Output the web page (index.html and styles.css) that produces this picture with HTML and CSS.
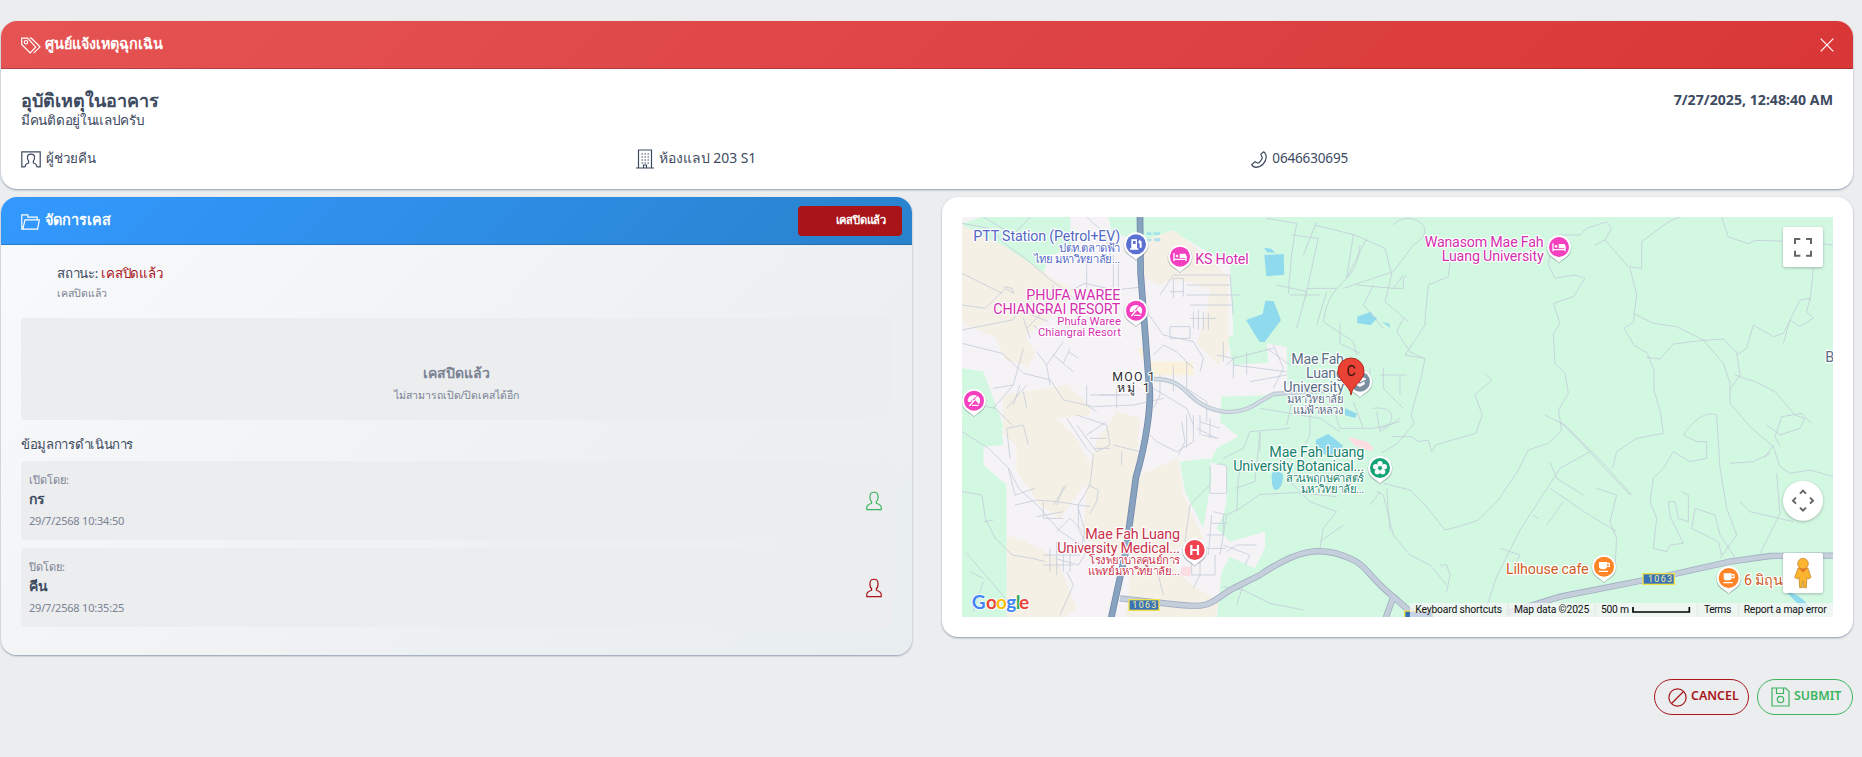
FILE: index.html
```html
<!DOCTYPE html>
<html lang="th">
<head>
<meta charset="utf-8">
<title>ศูนย์แจ้งเหตุฉุกเฉิน</title>
<link rel="stylesheet" href="styles.css">
</head>
<body>
<main class="page">
  <section class="card incident">
    <header class="card-head head-red">
      <svg class="icon tags" width="20" height="18" viewBox="0 0 20 18"><path d="M.7 1.2v6.2l8.4 8.4 5.6-5.6L6.6 1.2zM8.8 1.2h1.5l8.7 8.6-6.3 6.4M12.5 1.2"/><circle cx="5" cy="5.2" r="1.7"/></svg>
      <h1 class="head-title t-center">ศูนย์แจ้งเหตุฉุกเฉิน</h1>
      <svg class="icon close" width="14" height="14" viewBox="0 0 14 14"><path d="M.7.7l12.6 12.6M13.3.7L.7 13.3"/></svg>
    </header>
    <div class="incident-body">
      <div class="incident-top">
        <div>
          <h2 class="incident-title">อุบัติเหตุในอาคาร</h2>
          <p class="incident-desc">มีคนติดอยู่ในแลปครับ</p>
        </div>
        <time class="incident-time">7/27/2025, 12:48:40 AM</time>
      </div>
      <div class="facts">
        <div class="fact">
          <svg class="icon" width="20" height="17" viewBox="0 0 20 17"><path d="M3.6 15.8H.8V.8h18.4v15h-2.8M4 16.2c0-3 1.7-3.6 3.6-4.2V10C6.4 8.800 6.300 7 6.500 5.500c.3-3.200 6.700-3.200 7 0 .2 1.500.1 3.300-1.100 4.500v2c1.900.6 3.600 1.200 3.600 4.200"/></svg>
          <span class="fact-a">ผู้ช่วยคีน</span>
        </div>
        <div class="fact">
          <svg class="icon" width="18" height="20" viewBox="0 0 18 20"><path d="M2.500 18.500V1h13v17.500M0 19h18M7.500 18.500V16h3v2.500"/><path class="dots" d="M5.500 5h7.500M5.500 8h7.500M5.500 11h7.500M5.500 14h7.500"/></svg>
          <span class="fact-b">ห้องแลป 203 S1</span>
        </div>
        <div class="fact">
          <svg class="icon phone" width="16" height="17" viewBox="0 0 16 17"><path d="M9.800 3.400L12.500.8c1 .2 2.700 2.700 2.700 5.200 0 5-4.500 10.200-10.500 10.300C2.900 16 1 14.800.8 13.400l3.300-2.700 2.700 1.500c1.900-.8 4.300-3.800 4.500-5.700z"/></svg>
          <span class="fact-c">0646630695</span>
        </div>
      </div>
    </div>
  </section>

  <div class="columns">
    <section class="card manage">
      <header class="card-head head-blue">
        <svg class="icon folder" width="19" height="16" viewBox="0 0 19 16"><path d="M2.500 15.200H.8V.8h6v2.400h9.400v2.500M1.800 15.200L4 5.800h14.300l-1.700 9.400z"/></svg>
        <h2 class="head-title t-manage">จัดการเคส</h2>
        <span class="badge">เคสปิดแล้ว</span>
      </header>
      <div class="manage-body">
        <div class="status">
          <p class="status-line">สถานะ: <b>เคสปิดแล้ว</b></p>
          <p class="status-sub">เคสปิดแล้ว</p>
        </div>
        <div class="closed">
          <p class="closed-title">เคสปิดแล้ว</p>
          <p class="closed-sub">ไม่สามารถเปิด/ปิดเคสได้อีก</p>
        </div>
        <h3 class="log-title">ข้อมูลการดำเนินการ</h3>
        <div class="log">
          <div>
            <p class="log-label">เปิดโดย:</p>
            <p class="log-name">กร</p>
            <p class="log-date">29/7/2568 10:34:50</p>
          </div>
          <svg class="icon green" width="16" height="20" viewBox="0 0 16 20"><path d="M.8 18.600v-2.400c0-2 1.500-2.800 4.800-4v-1.400C4 9.500 3.800 7 4 5c.3-5 7.700-5 8 0 .2 2 0 4.500-1.600 5.800v1.400c3.300 1.200 4.800 2 4.800 4v2.400z"/></svg>
        </div>
        <div class="log">
          <div>
            <p class="log-label">ปิดโดย:</p>
            <p class="log-name">คีน</p>
            <p class="log-date">29/7/2568 10:35:25</p>
          </div>
          <svg class="icon red" width="16" height="20" viewBox="0 0 16 20"><path d="M.8 18.600v-2.400c0-2 1.500-2.800 4.800-4v-1.400C4 9.500 3.800 7 4 5c.3-5 7.700-5 8 0 .2 2 0 4.500-1.600 5.800v1.400c3.300 1.200 4.800 2 4.800 4v2.400z"/></svg>
        </div>
      </div>
    </section>

    <section class="card map-card">
      <svg class="map" width="871" height="400" viewBox="66 66 2613 1200">
        <defs>
          <g id="pin"><path class="pin-shadow" d="M0 50C-7 38-37 34-37 2a37 37 0 0 1 74 0C37 34 7 38 0 50z"/><path fill="#fff" d="M0 47C-7 35-36 30-36 0a36 36 0 0 1 72 0C36 30 7 35 0 47z"/><circle r="30"/></g>
          <g id="bed"><path d="M-18-11v24M-18 8h36M18-2v15" fill="none" stroke="#fff" stroke-width="4"/><circle cx="-9" cy="-2" r="4" fill="#fff"/><path fill="#fff" d="M-1-9h16q4 0 4 6v7H-1z"/></g>
          <g id="cup"><path fill="#fff" d="M-15-14h24v15c0 9-24 9-24 0zM-16 12h28v4h-28z"/><path d="M9-10h7v9h-8" fill="none" stroke="#fff" stroke-width="3.500"/></g>
          <g id="parasol"><path d="M-18 4c-4-14 12-26 27-19C-1-9-8-2-10 4zM2-3c3-5 5-8 10-10 8 6 8 17 3 24z" fill="#fff"/><path d="M-6 2c2-7 7-12 13-15" stroke="#fff" stroke-width="3" fill="none"/><path d="M2-2l-16 18M-6 14h20" stroke="#fff" stroke-width="4"/></g>
        </defs>
        <rect class="m-green" x="66" y="66" width="2613" height="1200"/>

        <path class="m-urban" d="M66 66H505L515 110 600 140 640 190 700 110 870 210 880 420 862 430 880 510 950 505 985 505 980 445 1040 455 1042 570 1110 598 1000 600 845 605 840 680 895 725 830 760 810 800 860 815 860 920 850 960 830 1000 870 1040 975 1010 975 1060 945 1120 870 1085 845 1130 830 1266H370L200 1266 200 870 130 810 130 750 180 740 190 690 130 530 66 520z"/>
        <g class="m-green">
          <path d="M125 66h265l5 100-70 15-15 60-100-50-90-50-50-30V85z"/>
          <path d="M66 520l64 10 20 80 35 90 5 50-60 5v65l65 50 5 396H66z"/>
          <path d="M720 800l90-10 5 60-15 90-10 60-55-110z"/>
          <path d="M595 940l70 15 10 25-10 8-75-22z" fill="#b5eccb"/>
        </g>
        <g class="m-beige">
          <path d="M66 90l130 65 150 100 60 30-40 50-110 90 30 50-20 40-70-20-30-70-100-40z"/>
          <path d="M600 150l30-20 70-25 65 50 100 90v220l-30 45-65-65 30-90 10-70-60-25-60-5-30 15-50-20z"/>
          <path d="M190 600l190-30 70 60 0 30-100 10 60 60 30 60 25 40-45 60-60 80-60-40-70-100 0-80-40-30z"/>
          <path d="M470 740l60-90 70 20-10 130-30 180-20 110-110-60 10-190z"/>
          <path d="M600 840l115-50 15 110 60 130-80 30-5 60 40 40 90 60-10 46H555l20-150-10-130z"/>
          <path d="M200 1020l60 20 90 50 60 150-50 40H200z"/>
          <path d="M590 460h30l10 40 130 0v40H640z" fill="#f9f1dc"/>
        </g>
        <g class="m-water">
          <path d="M973 180l58-3 2 62-54 5zM918 375l50-18 8-40 25 1 22 58-50 66-15-2zM972 158l22 3 12 12-25-1zM1252 365l40-15 8 12 12 8-20 20-40-5zM1326 381l22 5 2 12zM1215 640l36 16-6 13-30-8zM1127 735l38-18 45 35-20 20-20 10-42-10zM995 840c0-16 34-16 34 5 0 26-13 40-22 40s-12-20-12-45zM2538 1190c25 0 70 30 78 62l-8 10z"/>
          <path d="M620 112h14v8h-14zM640 112h20v8h-20zM622 132h12v7h-12zM642 130h19v9h-19z" opacity=".7"/>
        </g>
        <path d="M1222 725l60 15 20 20-10 8-48-15zM725 1115h30l-5 30-30-5z" fill="#fcdde2"/>

        <g class="roads">
          <path d="M66 85l80 15 60 55 50 35 70 60 60 45 50 50M270 66l-70 75M130 66l120 70M440 66l55 50 20 80M66 330l70 10 60-60 25 15-5-15-25-5M66 235l120 60M66 405l150-30 45-50 30-40M66 445l120 30 65 60 80 20 40 60 90 20 120-5 90-20M290 470l30 40 10 60M320 510l50-70M340 480l60 50M385 470l30 20M390 460l-20 45M260 400l60-60 20-70M280 390l35 30M275 360l50 20M250 370l20 60M395 285l40-20 90 20 90-10M440 180v110M520 180v115M535 290v-90M660 300l40-60h170l10 120M700 310v-60h30v55M690 290h40M740 270l130 0M740 300h160M750 330h130M760 350v50M775 345v60M790 350v55M805 355v50M750 370h80M690 395h60v35h-60zM620 350l50 70 90 20 30 50-10 40M640 480l30-30 40 20 50 50M660 540v60l-20 40M700 510v80M640 580l100 60 20 50M740 500v80l60 40v60M830 480l50 10 120-30M880 490v60M920 470v70M880 510l160 20M930 560l110-20M890 480l-30 30M850 440v60"/>
          <path d="M66 620l100 20 50 50M160 640l60-70M200 640l60-70M240 570l-20 60M260 640l-10-50M440 570v60l30 20M530 580l0 60M480 600h90M450 600h90M250 460l-30 110-60 10"/>
          <path d="M66 710l80 50 60 60 30 60 60 55 60 70 60 40 30 30M210 790l-10-90 50-10 15 60M205 820l20 80 60-20M225 930l65-15 60 5 100 15M310 920v50h60M340 930l40-60M350 930l20-55M290 965l80-15M350 1010l40-40 60 60M410 690l60 80 40-20-10-60-90-30M380 670l60 90 20 20-10 90-35 60 0 70 20 40M450 730h50M460 760h50M440 720l60-40M520 750l80 20M545 770l0 40M445 870l30 15-5 35M415 940l20 70-10 40M470 920l-20 35M330 1060v70M350 1040v100M370 1060v70M390 1050v80M310 1080h110M310 1110h90M345 1090l70 20 25-40M380 1130l20 40-40 90M240 1245l-40-30-60-70-60-70M66 890l60 10 10 70 30 60 50 50 60 10 40 10M130 980l30-5M130 1160l-30 90M90 1130l40 20"/>
          <path d="M725 680l10 60-20 40M740 660v100M760 660v80l-50 30-60-30-20-20M770 700l60 30M780 680l60 20M785 720l50 10M780 660v60M810 670v60M830 810c0-5 25-5 30 5v80h-50v-80M810 870l-60 60-15 110M820 950l40 10-20 120M815 960l-10 120M815 985h45M800 1020h50v-60M740 1060h120M850 1050l80 30-15 30M860 1070l30-20h60M755 1080v60h70v-60M780 1080v60l-20 40M650 1120l20 80M860 960l40-20 60-42 110-5 120 12M890 950l5-100 10-50M885 880l60-20 15-150M960 710v60M850 790l60-30 20-50 120-10M910 1170l-20 60M850 1175l60 10 80 40 100 20"/>
          <path d="M980 70l90 15-15 90-10 120M1055 120l80 10-40 180M1130 80l-40 100M1125 90l120 30 90 40 20 80-20 80 70 60M1240 120l-20 130M1280 130l-60 120M1360 90c40-50 150 5 60 60l-60 80-60 20-90 30M1010 270l90 20-30 110M1050 300h90M1100 280h90M1160 290l-30 100M1250 270l110 10 30-40M1300 270l-30 60 60 70M1360 280l30 0 0-30 10-10M1150 380l90 60 10 40M1200 385v60l60 30M1150 380c20-140 100-100 110-230M1230 540l60 10M1290 520v60M1330 520v60l60 60M1320 540h80M1380 540v60M980 460l70 50M1000 450l30 70-30 60M1050 480l60 40M960 640l180 30 60 40M1060 600l-20 90M1110 600v120l-20 40M1180 640l20 60 100 0 80-20M1240 620l30 80M1310 650l10 60 60-40M1300 640c70-10 70 50 20 60"/>
          <path d="M1530 200l-5 45-60 25-8 80-2 40-60 90 60 10-12 60-30 110 10 25-50 60-50 30M1355 725l60 0 20 15 30-5 10 35 12-20 50-15 70-20 20-55-22-60 50-45-20-20M1390 370l-20 40 40 60 40 20M1330 865l80 20 50 50 55 70 40-10 60-20 60-60 60-90 30-60 60-20 40-40-10-60 30-50-10-60-30-30-5-90 20-30-20-60 60-20 35-55-30-10-60 10-20-40 10-60M1815 660l60 30 120 120 80 90M1930 900l-80-50-20-50M1950 770l-90 50-120 185-70 140-40 120M1780 960l15 12M1820 990l50-70M1680 1060l60 20-10 20M1830 880l110 75 90 55M1310 890l20 10 30 120 50 60 60 30 50 60M1320 890l-30 40M1340 880l10 130M1140 1060l10-60 40-50-80-30-60-60M1500 1110l20 0 10 30-10 50M1210 990l-70 50"/>
          <path d="M1860 120l60 0 20-20 60-20 15 20-20 35-30 15M1995 135l70 80 40 5 0-80 80-60 50-20M2070 220l20 80-8 60 0 20-30 20 30 50 40 25 20 50 0 60 20 70 8 60-80 15-60 40-12 50M2080 355l60 30 70 10 80 40 60 70 20 60 0 60 60 70 70 60 20 60 30 20 60-10 70 20M2120 487l40 5 40-45 80-10 70-5 40 40 10 70-30 40M2385 540l60 20 60 30 60 70 30 10-15 30-60 20-40-30M2500 750l-20 30-5 10M2520 755l-15-30 20-60 60-10 30 30M2390 480l30-20 20-70 60 35 30-10 50-100 30-5-10 40 20 20-40 25-30-20-20 70M2345 66l20 60 60 20 20-10 160 5 80 10M2620 220l-10 100M2330 660c-20-10-60 0-100 60l40 20 30 0v50l-50 10-50-30-30 50-30 30-10 70 20 50-10 90 40 10 10-20 40-5-40-80-5-45 20 0 10 50 30 10v-80l-20-10M2265 940l60 20 15 60 40 60 10 20M2330 660l10 160 20 120 30 80-50 70M2265 940l-10 60 40 20 40 20 10 40M2510 835l10 120-60 120M2400 920l30 30 130 30M2370 805l70-5 50-25M1860 680l60 60 150 160M1970 880l60 20-20 80 20 50-5 90"/>
        </g>
        <g class="roads wide"><path d="M640 552c80 0 90 35 130 65s110 50 170 15l60-35 160-10"/></g>
        <g class="roads wide inner"><path d="M640 552c80 0 90 35 130 65s110 50 170 15l60-35 160-10"/></g>
        <g fill="none">
          <path class="r-edge" d="M540 1210l180 20c100 10 90-10 160-50l80-40c110-75 180-90 270-50 50 20 60 60 130 115l90 80M1360 1205l-25 70M1700 1255l160-50 330-65 180-40 120-17 189-1"/>
          <path class="r-grey" d="M540 1210l180 20c100 10 90-10 160-50l80-40c110-75 180-90 270-50 50 20 60 60 130 115l90 80M1360 1205l-25 70M1700 1255l160-50 330-65 180-40 120-17 189-1"/>
          <path class="r-main-edge" d="M600 66l2 170 24 320c12 60-8 190-38 290l-30 220-46 210"/>
          <path class="r-main" d="M600 66l2 170 24 320c12 60-8 190-38 290l-30 220-46 210"/>
        </g>

        <g class="shield"><rect x="567" y="1214" width="90" height="32"/><text x="613" y="1240" textLength="72">1063</text><rect x="2109" y="1136" width="94" height="32"/><text x="2160" y="1162" textLength="72">1063</text><rect x="1394" y="1248" width="86" height="32"/></g>

        <g class="lbl blue end"><text x="541" y="138" textLength="441">PTT Station (Petrol+EV)</text><g class="th"><text x="541" y="170" textLength="184">ปตท.ตลาดฟ้า</text><text x="541" y="203" textLength="260">ไทย มหาวิทยาลัย...</text></g></g>
        <g class="lbl pink end"><text x="541" y="315" textLength="282">PHUFA WAREE</text><text x="541" y="357" textLength="381">CHIANGRAI RESORT</text><g class="th"><text x="543" y="391" textLength="191">Phufa Waree</text><text x="543" y="424" textLength="249">Chiangrai Resort</text></g><text x="1811" y="156" textLength="357">Wanasom Mae Fah</text><text x="1811" y="199" textLength="306">Luang University</text></g>
        <g class="lbl pink"><text x="766" y="207" textLength="160">KS Hotel</text></g>
        <g class="lbl dark"><text x="517" y="557" textLength="128">MOO 1</text><text x="531" y="592" textLength="98">หมู่ 1</text></g>
        <g class="lbl slate end"><text x="1212" y="507" textLength="158">Mae Fah</text><text x="1212" y="549" textLength="114">Luang</text><text x="1212" y="591" textLength="182">University</text><g class="th"><text x="1212" y="625" textLength="170">มหาวิทยาลัย</text><text x="1212" y="658" textLength="152">แม่ฟ้าหลวง</text></g></g>
        <g class="lbl teal end"><text x="1273" y="786" textLength="285">Mae Fah Luang</text><text x="1273" y="828" textLength="393">University Botanical...</text><g class="th"><text x="1273" y="860" textLength="235">สวนพฤกษศาสตร์</text><text x="1273" y="893" textLength="190">มหาวิทยาลัย...</text></g></g>
        <g class="lbl crimson end"><text x="720" y="1033" textLength="284">Mae Fah Luang</text><text x="720" y="1075" textLength="368">University Medical...</text><g class="th"><text x="720" y="1107" textLength="272">โรงพยาบาลศูนย์การ</text><text x="720" y="1140" textLength="275">แพทย์มหาวิทยาลัย...</text></g></g>
        <g class="lbl orange"><text x="1698" y="1137" textLength="248">Lilhouse cafe</text><text x="2412" y="1169" textLength="118">6 มิถุน</text></g>
        <g class="lbl slate"><text x="2656" y="500">B</text></g>

        <use href="#pin" x="588" y="148" fill="#5b70d2"/><path transform="translate(588 148)" d="M-14-15h17v30h-17zM-18 12h25v4h-25zM6-6l5 4v12h6V-8l-6-6" fill="#fff"/><path d="M579 138h8v9h-8z" fill="#5b70d2"/>
        <g fill="#f43fbe"><use href="#pin" x="720" y="185"/><use href="#pin" x="588" y="347"/><use href="#pin" x="102" y="617"/><use href="#pin" x="1857" y="156"/></g>
        <use href="#bed" x="720" y="185"/><use href="#bed" x="1857" y="156"/><use href="#parasol" x="588" y="347"/><use href="#parasol" x="102" y="617"/>
        <g fill="#ff8427"><use href="#pin" x="1992" y="1115"/><use href="#pin" x="2366" y="1149"/></g><use href="#cup" x="1992" y="1115"/><use href="#cup" x="2366" y="1149"/>
        <use href="#pin" x="764" y="1065" fill="#f04352"/><path d="M754 1050v30M774 1050v30M754 1065h20" stroke="#fff" stroke-width="6.500"/>
        <use href="#pin" x="1320" y="819" fill="#15a374"/><g fill="#fff"><circle cx="1320" cy="806" r="8"/><circle cx="1333" cy="815" r="8"/><circle cx="1328" cy="830" r="8"/><circle cx="1312" cy="830" r="8"/><circle cx="1307" cy="815" r="8"/></g><circle cx="1320" cy="819" r="4" fill="#15a374"/>
        <use href="#pin" x="1260" y="560" fill="#7b8fa0"/><path d="M1240 552l20-10 20 10-20 10zM1248 560l12 6 14-7v9l-14 8-12-7z" fill="#fff"/>
        <path class="marker" d="M1233 600C1231 572 1194 560 1194 528a39 39 0 0 1 78 0C1272 560 1235 572 1233 600z"/><text class="marker-c" x="1233" y="542">C</text>

        <g class="google" transform="translate(0 1243)"><text x="95" fill="#4285f4">G</text><text x="138" fill="#ea4335">o</text><text x="168" fill="#fbbc05">o</text><text x="199" fill="#4285f4">g</text><text x="227" fill="#34a853">l</text><text x="237" fill="#ea4335">e</text></g>

        <g class="control"><rect x="2529" y="96" width="120" height="120" rx="6"/><circle cx="2589" cy="917" r="60"/><rect x="2529" y="1074" width="120" height="120" rx="6"/></g>
        <path class="glyph" d="M2565 147v-15h16M2598 132h15v15M2613 167v15h-15M2581 182h-16v-15"/>
        <path class="glyph" d="M2580 896l9-9 9 9M2580 938l9 9 9-9M2568 908l-9 9 9 9M2610 908l9 9-9 9"/>
        <g><path d="M2574 1120q15-8 30 0l9 27-8 5-4-5-2 31h-8v-18h-4v18h-8l-2-31-4 5-9-5z" fill="#fbb52f" stroke="#b9791c" stroke-width="2"/><path d="M2576 1119h26l-13 14z" fill="#e8762c"/><circle cx="2589" cy="1106" r="16" fill="#fbb52f" stroke="#b9791c" stroke-width="2"/></g>

        <path d="M1410 1224h1269v42H1410z" fill="#f5f5f5" opacity=".75"/><path d="M1705 1224v42M1966 1224v42M2272 1224v42M2396 1224v42" stroke="#e4e8e6" stroke-width="3"/>
        <g class="foot"><text x="1426" y="1254" textLength="260">Keyboard shortcuts</text><text x="1722" y="1254" textLength="226">Map data ©2025</text><text x="1983" y="1254" textLength="84">500 m</text><text x="2292" y="1254" textLength="82">Terms</text><text x="2411" y="1254" textLength="249">Report a map error</text></g>
        <path d="M2079 1236v15h169v-15" fill="none" stroke="#000" stroke-width="5"/>
      </svg>
    </section>
  </div>

  <footer class="actions">
    <button class="btn cancel red"><svg class="icon" width="19" height="19" viewBox="0 0 19 19"><circle cx="9.500" cy="9.500" r="8.600"/><path d="M3.500 15.500l12-12"/></svg><span class="btn-text">CANCEL</span></button>
    <button class="btn green"><svg class="icon" width="19" height="20" viewBox="0 0 19 20"><path d="M1 1h13.500L18 4.500V19H1zM5.500 1v5.500h7V1"/><circle cx="9.500" cy="12.500" r="3.200"/></svg><span class="btn-text">SUBMIT</span></button>
  </footer>
</main>
</body>
</html>
```
FILE: styles.css
```css
* { box-sizing: border-box; }
body { margin: 0; background: #ebedee; color: #3d4a5f; font-family: "Noto Sans", "Open Sans", sans-serif; font-size: 14px; overflow: hidden; }
h1, h2, h3, p { margin: 0; white-space: nowrap; }
.page { width: 1854px; height: 757px; padding: 21px 1px 0; }
.card { border-radius: 16px; overflow: hidden; box-shadow: 0 1px 2px rgba(70, 90, 125, .55); background: #fff; }
.icon { fill: none; stroke: currentColor; stroke-width: 1.2; flex: none; }
.dots { stroke-dasharray: 1.5 1.5; }
.green { color: #3db560; }
.red { color: #a91419; }

.card-head { display: flex; align-items: center; height: 48px; padding: 0 10px 0 20px; color: #fff; }
.head-red { background: linear-gradient(135deg, #e55353, #d93737); border-bottom: 1px solid rgba(100, 30, 40, .35); padding-right: 19px; }
.head-blue { background: linear-gradient(135deg, #3399ff, #2982cc); border-bottom: 1px solid rgba(30, 60, 100, .35); }
.head-title { font-size: 14.400px; font-weight: 700; line-height: 20px; margin-left: 4px; padding-bottom: 2px; }
.t-manage { margin-left: 5px; }
.close { margin-left: auto; }
.tags, .folder { margin-top: 3px; }

.incident { height: 168px; }
.incident-body { padding: 19px 20px; }
.incident-top { display: flex; justify-content: space-between; height: 60px; }
.incident-title { font-size: 18px; font-weight: 600; line-height: 24px; }
.incident-desc { font-size: 13.500px; letter-spacing: -.3px; line-height: 17px; }
.incident-time { font-size: 14.150px; font-weight: 700; line-height: 24px; }
.facts { display: grid; grid-template-columns: repeat(3, 1fr); gap: 32px; }
.fact { display: flex; align-items: center; gap: 5px; height: 20px; white-space: nowrap; }
.fact .icon { margin-top: 2px; }
.fact-a { font-size: 13.300px; }
.fact-b { font-size: 13.900px; }
.fact-c { font-size: 13.500px; letter-spacing: -.15px; }
.phone { margin-left: 1px; }

.columns { display: grid; grid-template-columns: 1fr 1fr; gap: 30px; margin-top: 8px; align-items: start; }
.manage { height: 458px; background: linear-gradient(135deg, #f9fafb, #f0f2f4 50%, #e8edf0); }
.badge { margin-left: auto; width: 104px; height: 30px; border-radius: 4px; background: #a91419; font-size: 11.200px; letter-spacing: -.2px; font-weight: 600; line-height: 28px; text-align: right; padding-right: 16px; white-space: nowrap; }
.manage-body { padding: 17px 20px; }
.status { padding-left: 36px; height: 56px; }
.status-line { font-size: 13.300px; letter-spacing: -.25px; line-height: 22px; }
.status-line b { color: #a91419; font-weight: 500; }
.status-sub { font-size: 10.600px; line-height: 18px; color: #7a8294; }
.closed { height: 102px; background: #ebedee; border-radius: 4px; text-align: center; padding-top: 44px; color: #7a8294; }
.closed-title { font-size: 14px; font-weight: 600; line-height: 22px; }
.closed-sub { font-size: 10.500px; line-height: 23px; }
.log-title { font-size: 13.200px; letter-spacing: -.35px; font-weight: 500; line-height: 22px; margin: 13px 0 6px; }
.log { display: flex; justify-content: space-between; align-items: center; height: 79px; padding: 1px 10px 0 8px; margin-bottom: 8px; background: #ebedee; border-radius: 4px; }
.log-label, .log-date { font-size: 11px; line-height: 20px; color: #7a8294; }
.log-label { line-height: 19px; }
.log-date { letter-spacing: -.2px; line-height: 23px; }
.log-name { font-weight: 700; line-height: 20px; }

.map-card { height: 440px; padding: 20px; }
.map { display: block; font-family: Roboto, sans-serif; }
.m-green { fill: #d3f8e2; }
.m-urban { fill: #f5f3f6; }
.m-beige { fill: #f5f0e5; }
.m-water { fill: #90daee; }
.roads { fill: none; stroke: #bfc9d8; stroke-width: 2.600; stroke-linejoin: round; opacity: .85; }
.roads.wide { stroke: #b5c3d0; stroke-width: 13; opacity: 1; }
.roads.inner { stroke: #d3dbe4; stroke-width: 8; }
.r-edge { stroke: #a3b0c4; stroke-width: 19; }
.r-grey { stroke: #c5cedb; stroke-width: 14; }
.r-main-edge { stroke: #7189a8; stroke-width: 20; }
.r-main { stroke: #88a3c0; stroke-width: 15; }
.shield rect { fill: #3a72b5; stroke: #f2e24a; stroke-width: 4; }
.shield text { fill: #f6f1a0; font-size: 27px; text-anchor: middle; }
.lbl { font-size: 43px; paint-order: stroke; stroke: #fff; stroke-width: 7px; stroke-linejoin: round; }
.lbl .th { font-size: 34px; }
.end { text-anchor: end; }
.blue { fill: #5268c4; }
.pink { fill: #d42fae; }
.slate { fill: #5a6f86; }
.teal { fill: #15826a; }
.crimson { fill: #c9314a; }
.orange { fill: #cf5a1c; }
.dark { fill: #2a2c30; font-size: 37px; }
.pin-shadow { fill: #5a6b78; opacity: .45; }
.marker { fill: #ea4335; stroke: #b5281d; stroke-width: 3; }
.marker-c { font-size: 42px; text-anchor: middle; fill: #30100c; }
.google { font-size: 57px; font-family: Lato, sans-serif; font-weight: 700; paint-order: stroke; stroke: #fff; stroke-width: 5px; }
.control { fill: #fff; filter: drop-shadow(0 3px 4px rgba(0, 0, 0, .25)); }
.glyph { fill: none; stroke: #666; stroke-width: 6; }
.foot { font-size: 31px; fill: #111; }

.actions { display: flex; justify-content: flex-end; gap: 8px; margin-top: 24px; }
.btn { display: flex; align-items: center; width: 96px; height: 36px; padding: 0 0 0 13px; gap: 4px; border: 1px solid currentColor; border-radius: 18px; background: none; font: 600 12.400px "Noto Sans", sans-serif; }
.cancel { width: 95px; }
.btn-text { padding-bottom: 3px; }
```
